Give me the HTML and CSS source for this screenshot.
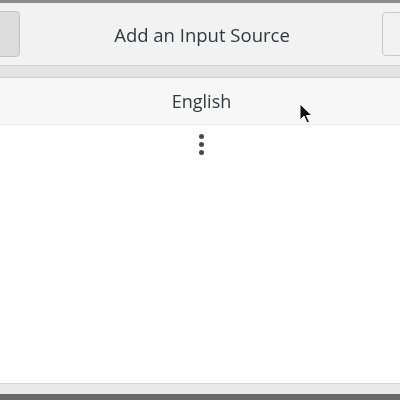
FILE: index.html
```html
<!DOCTYPE html>
<html lang="en">
<head>
    <meta charset="UTF-8">
    <title>Add an Input Source</title>
    <link rel="stylesheet" href="styles.css">
</head>
<body>
    <div class="dialog">
        <div class="topline"></div>
        <div class="header">
            <button class="hbtn hbtn-left"></button>
            <span class="title">Add an Input Source</span>
            <button class="hbtn hbtn-right"></button>
        </div>
        <div class="sep"></div>
        <div class="row">English</div>
        <div class="list">
            <div class="more">
                <span class="dot"></span>
                <span class="dot"></span>
                <span class="dot"></span>
            </div>
        </div>
        <div class="footer"></div>
        <div class="bottombar"></div>
        <svg class="cursor" width="14" height="22" viewBox="0 0 14 22">
            <path d="M1 1 L1 17 L5 13 L8 20 L10.5 19 L7.5 12.5 L13 12.5 Z" fill="#111" stroke="#fff" stroke-width="1"/>
        </svg>
    </div>
</body>
</html>
```

FILE: styles.css
```css
body {
    margin: 0;
    background: #ffffff;
    font-family: 'Open Sans', 'Noto Sans', sans-serif;
    color: #2e3436;
}
.dialog {
    position: relative;
    display: flex;
    flex-direction: column;
    width: 400px;
    height: 400px;
    overflow: hidden;
    filter: blur(0.6px);
}
.topline {
    height: 3px;
    background: #8c8c8c;
}
.header {
    height: 62px;
    display: flex;
    align-items: center;
    justify-content: space-between;
    background: #f2f2f2;
}
.hbtn {
    width: 32px;
    height: 46px;
    border-radius: 4px;
    padding: 0;
}
.hbtn-left {
    margin-left: -12px;
    background: #dcdcdc;
    border: 1px solid #c4c4c4;
}
.hbtn-right {
    margin-right: -14px;
    height: 44px;
    background: #f1f1f1;
    border: 1px solid #c8c8c8;
}
.title {
    font-size: 18.5px;
    color: #34383a;
    margin-left: 2px;
}
.sep {
    height: 11px;
    background: #e3e3e3;
    border-top: 1px solid #d2d2d2;
    border-bottom: 1px solid #d0d0d0;
}
.row {
    height: 46px;
    display: flex;
    align-items: center;
    justify-content: center;
    background: #f7f7f7;
    border-bottom: 1px solid #e6e6e6;
    font-size: 18px;
    color: #34383a;
    padding-left: 3px;
}
.list {
    flex: 1;
    display: flex;
    justify-content: center;
    padding-top: 9px;
    background: #ffffff;
}
.more {
    display: flex;
    flex-direction: column;
    gap: 3px;
    margin-left: 3px;
}
.dot {
    width: 5px;
    height: 5px;
    border-radius: 50%;
    background: #4a4a4a;
}
.footer {
    height: 10px;
    background: #e8e8e8;
    border-top: 1px solid #d6d6d6;
}
.bottombar {
    height: 6px;
    background: #686868;
}
.cursor {
    position: absolute;
    left: 299px;
    top: 103px;
}
```
